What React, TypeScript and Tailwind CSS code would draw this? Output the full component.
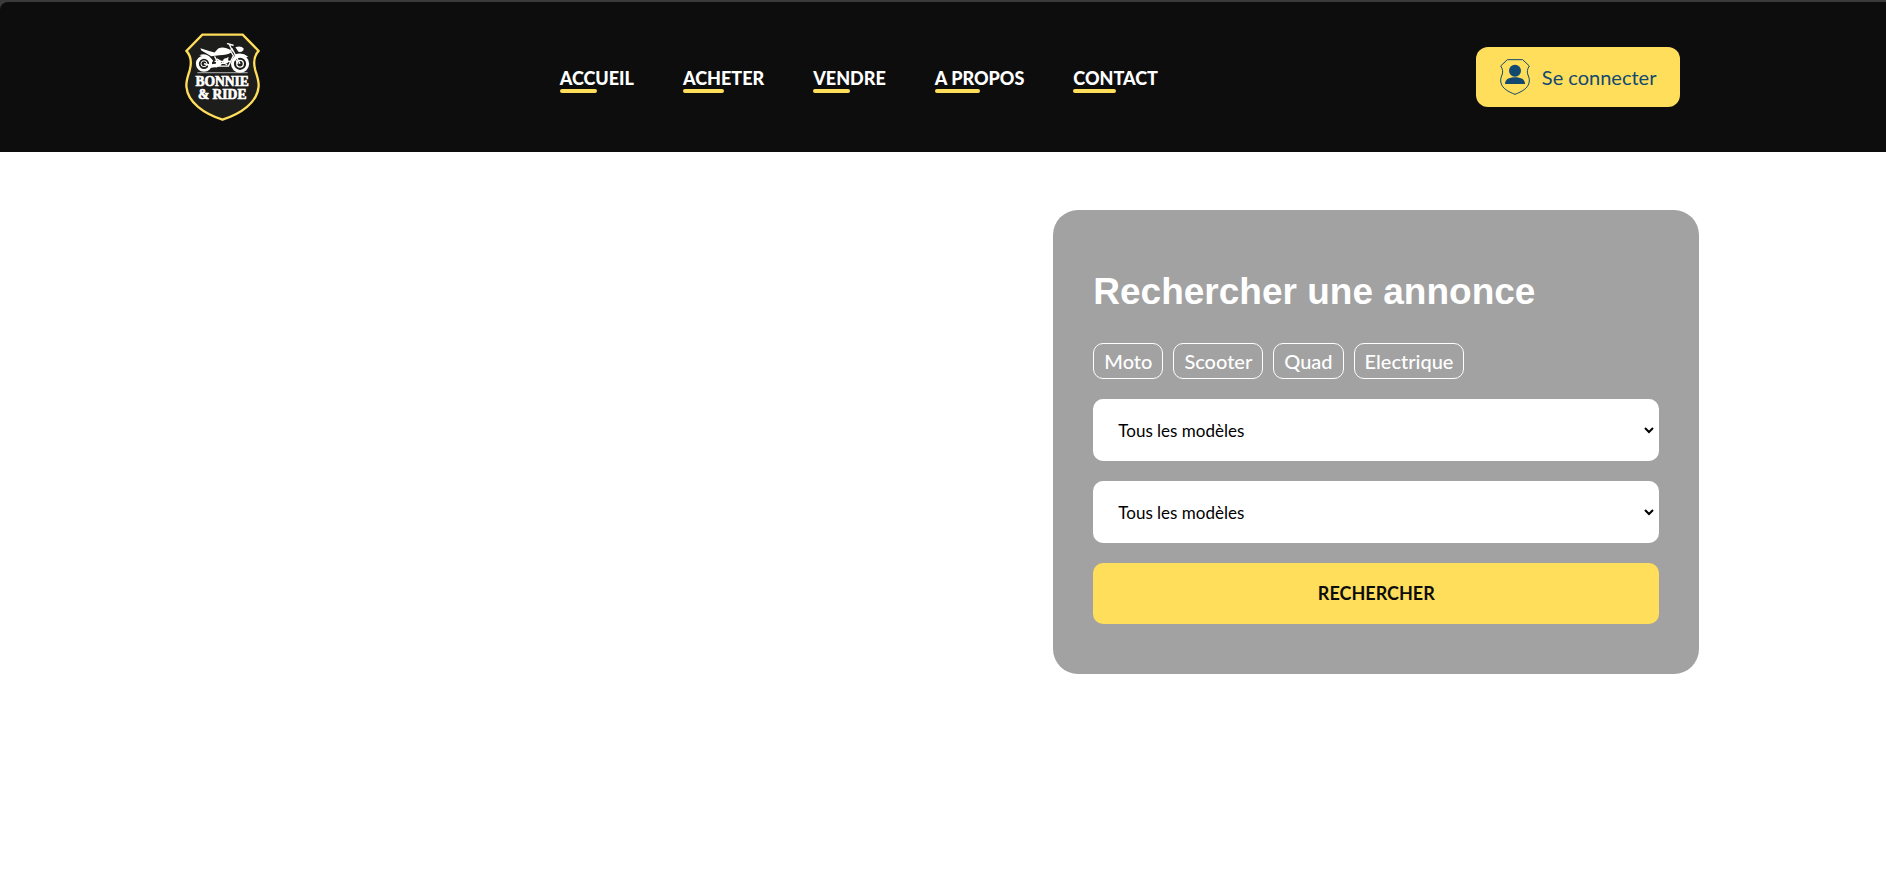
const navLinks = ["ACCUEIL", "ACHETER", "VENDRE", "A PROPOS", "CONTACT"];
const categories = ["Moto", "Scooter", "Quad", "Electrique"];

function Logo() {
  return (
    <svg viewBox="45 36 226 266" className="h-[88px] w-[75px]" role="img" aria-label="Bonnie & Ride">
      <path
        d="M97 41H219L267 90C251 108 251 126 257 148C263 168 269 182 267 199C263 246 214 280 158 298C102 280 53 246 49 199C47 182 53 168 59 148C65 126 65 108 49 90Z"
        fill="#1d1d1b"
        stroke="#fede5a"
        strokeWidth="7"
      />
      <g fill="none" stroke="#fff">
        <circle cx="102" cy="129" r="20" strokeWidth="9" />
        <circle cx="102" cy="129" r="9" strokeWidth="3" />
        <circle cx="211" cy="129" r="23" strokeWidth="9" />
        <circle cx="211" cy="129" r="10" strokeWidth="4" />
        <path d="M102 129L142 138M186 82L211 129M180 86L205 129" strokeWidth="4" />
        <path d="M173 68L190 73M178 69L188 90" strokeWidth="4" strokeLinecap="round" />
        <path d="M134 106L148 136H176L190 106M140 114L172 132M176 110L148 134M134 122H182" strokeWidth="4" />
        <path d="M82 156H234" strokeWidth="2" />
      </g>
      <g fill="#fff">
        <path d="M91 82L120 91L134 95L145 83Q160 76 178 85L184 95Q172 103 148 103L124 106Q108 97 94 89Z" />
        <path d="M88 103Q104 96 118 106L130 120L124 128Q116 108 98 106Z" />
        <path d="M194 102Q216 92 236 108L228 109Q212 101 196 108Z" />
        <path d="M197 79Q214 73 222 83Q222 95 206 93Z" />
        <path d="M112 132L142 128L148 138L118 142Z" />
        <circle cx="146" cy="128" r="8" />
        <circle cx="168" cy="120" r="8" />
      </g>
      <g
        fill="#fff"
        stroke="#fff"
        strokeWidth="2"
        fontFamily="Liberation Serif, serif"
        fontWeight="700"
        fontSize="41"
        textAnchor="middle"
      >
        <text x="157" y="197">BONNIE</text>
        <text x="157" y="235">&amp; RIDE</text>
      </g>
    </svg>
  );
}

function AccountIcon() {
  return (
    <svg viewBox="0 0 90 108" className="h-9 w-[30px]" aria-hidden="true">
      <path
        d="M22 2H68L88 21C81 30 81 40 84 48C88 57 89 64 87 72C83 88 66 98 45 106C24 98 7 88 3 72C1 64 2 57 6 48C9 40 9 30 2 21Z"
        fill="none"
        stroke="#124971"
        strokeWidth="3"
      />
      <circle cx="45" cy="35" r="18" fill="#124971" />
      <path d="M15 75C15 61 27 55 45 55S75 61 75 75Z" fill="#124971" />
    </svg>
  );
}

function ModelSelect({ id, label }: { id: string; label: string }) {
  return (
    <select
      id={id}
      aria-label={label}
      className="h-[62px] w-full rounded-[10px] border-x-2 border-white bg-white pl-[19px] text-[17px] text-black"
    >
      <option>Tous les modèles</option>
    </select>
  );
}

export default function App() {
  return (
    <div className="min-h-screen bg-white font-['Lato',sans-serif]">
      <div className="bg-[#3a3a3a] pt-0.5">
        <header className="flex h-[150px] items-center justify-between rounded-tl-lg bg-[#0d0d0d] pr-[10.9%] pl-[9.8%]">
          <a href="#accueil">
            <Logo />
          </a>
          <nav className="mr-[18px]">
            <ul className="flex gap-[49px]">
              {navLinks.map((label) => (
                <li key={label}>
                  <a href="#" className="block pt-1.5 text-[18px] leading-[22px] font-black whitespace-nowrap text-white">
                    {label}
                    <span className="block h-1 w-1/2 rounded-full bg-[#fede5a]" />
                  </a>
                </li>
              ))}
            </ul>
          </nav>
          <button
            type="button"
            className="flex h-[60px] items-center gap-3 rounded-xl bg-[#fede5a] px-6 text-[20px] whitespace-nowrap text-[#124971]"
          >
            <AccountIcon />
            Se connecter
          </button>
        </header>
      </div>

      <main className="flex justify-end px-[9.9%] pt-[58px]">
        <form className="w-[646px] max-w-full rounded-[25px] bg-[#a2a2a2] px-10 pt-[60px] pb-[50px]">
          <h1 className="font-['Liberation_Sans',sans-serif] text-[37px] leading-[43px] font-bold text-white">
            Rechercher une annonce
          </h1>
          <div className="mt-[30px] flex flex-wrap gap-2.5">
            {categories.map((label) => (
              <button
                key={label}
                type="button"
                className="h-9 rounded-[10px] border border-white px-2.5 text-[20px] leading-[34px] font-medium text-white"
              >
                {label}
              </button>
            ))}
          </div>
          <div className="mt-5 flex flex-col gap-5">
            <ModelSelect id="marque" label="Marque" />
            <ModelSelect id="modele" label="Modèle" />
            <button type="submit" className="h-[61px] rounded-[10px] bg-[#fede5a] text-[18px] font-bold text-[#0d0d0d]">
              RECHERCHER
            </button>
          </div>
        </form>
      </main>
    </div>
  );
}
